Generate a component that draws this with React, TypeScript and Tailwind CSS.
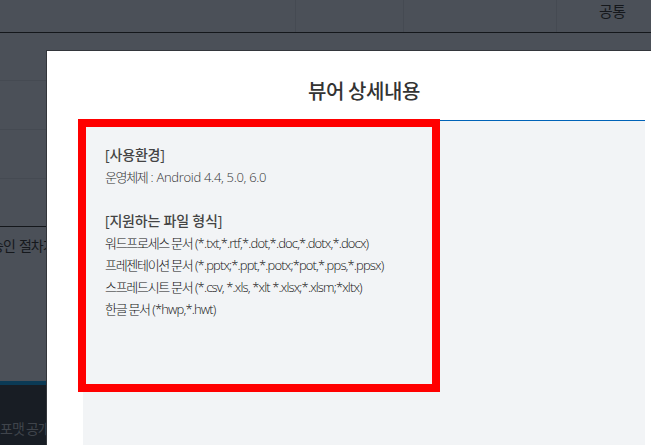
function Row({ name, files }: { name: string; files: string }) {
  return (
    <p className="leading-[22px]">
      <span className="tracking-[-1.3px]">{name}</span> {files}
    </p>
  );
}

export default function App() {
  return (
    <div className="relative h-[445px] w-[651px] overflow-hidden bg-[#4b5058] font-['Noto_Sans_CJK_KR',sans-serif]">
      <div className="flex h-[33px] border-b border-[#14171b]">
        <div className="w-[296px] border-r border-[#454a52]" />
        <div className="w-[108px] border-r border-[#454a52]" />
        <div className="w-[153px] border-r border-[#454a52]" />
        <div className="flex flex-1 items-center justify-start pb-[10px] pl-[42px] text-[15px] tracking-[-0.6px] text-[#15181c]">공통</div>
      </div>
      <div className="h-[48px] border-b border-[#454a52]" />
      <div className="h-[49px] border-b border-[#454a52]" />
      <div className="h-[49px] border-b border-[#454a52]" />
      <div className="h-[48px] border-b border-[#14171b]" />
      <div className="h-[38px] whitespace-nowrap pt-[8px] text-[14px] leading-[20px] tracking-[-1px] text-[#15181c] [word-spacing:2px]">
        <span className="ml-[-9px]">승인 절차가</span>
      </div>
      <div className="h-[116px]" />
      <div className="h-[4px] bg-[#0b3a55]" />
      <div className="h-[60px] whitespace-nowrap bg-[#181d24] pt-[33px] text-[14px] leading-[20px] tracking-[-1px] text-[#3f444b]">
        <span>포맷 공개</span>
      </div>

      <div className="absolute left-[46px] top-[50px] flex h-[420px] w-[620px] flex-col border-l border-t border-[#33363b] bg-white pl-[36px]">
        <h2 className="mt-[25px] mb-[14px] w-[562px] text-center text-[20px] font-medium leading-[30px] tracking-[-0.4px] text-[#333333]">뷰어 상세내용</h2>
        <div className="h-[400px] w-[562px] border-t border-[#0063b8] bg-[#f2f4f6]" />
      </div>

      <div className="absolute left-[78px] top-[119px] h-[273px] w-[362px] border-[8px] border-[#ff0000] pl-[19px] pt-[17px] font-['Open_Sans','Noto_Sans_CJK_KR',sans-serif] text-[13px] font-light tracking-[-0.85px] text-[#111111]">
        <p className="text-[14px] font-medium leading-[22px] tracking-[-0.15px] text-[#444444]">[사용환경]</p>
        <p className="leading-[22px] tracking-[-0.3px] text-[#333333]">
          <span className="tracking-[-1.35px]">운영체제</span> : Android 4.4, 5.0, 6.0
        </p>
        <p className="mt-[22px] text-[14px] font-medium leading-[22px] tracking-[-0.2px] text-[#444444]">[지원하는 파일 형식]</p>
        <Row name="워드프로세스 문서" files="(*.txt,*.rtf,*.dot,*.doc,*.dotx,*.docx)" />
        <Row name="프레젠테이션 문서" files="(*.pptx;*.ppt,*.potx;*pot,*.pps,*.ppsx)" />
        <Row name="스프레드시트 문서" files="(*.csv, *.xls, *xlt *.xlsx;*.xlsm;*xltx)" />
        <Row name="한글 문서" files="(*hwp,*.hwt)" />
      </div>
    </div>
  );
}
